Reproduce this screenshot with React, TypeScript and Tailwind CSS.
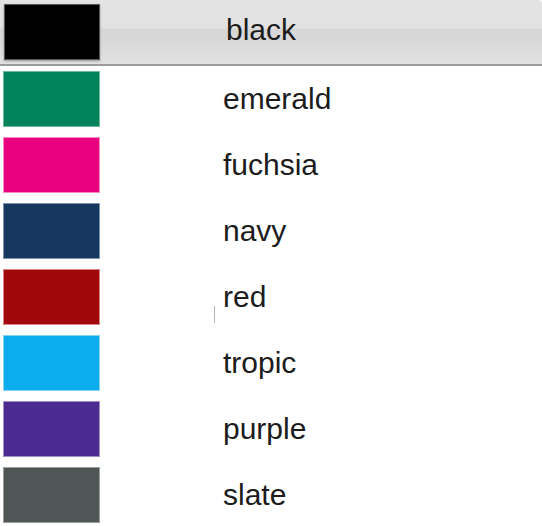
import React from "react";

const rows = [
  { name: "emerald", color: "#02835c", edge: "#6fb9a0" },
  { name: "fuchsia", color: "#e8007f", edge: "#f58cc4" },
  { name: "navy", color: "#16375f", edge: "#7f93ab" },
  { name: "red", color: "#a1060b", edge: "#d58486" },
  { name: "tropic", color: "#0badee", edge: "#86d4f5" },
  { name: "purple", color: "#4c2b91", edge: "#a18fc6" },
  { name: "slate", color: "#505556", edge: "#9a9d9e" },
];

export default function App() {
  return (
    <div
      className="relative w-[542px] h-[526px] bg-white overflow-hidden"
      style={{ fontFamily: '"Liberation Sans", Arial, sans-serif' }}
    >
      <div className="flex items-center h-[66px] border-b-2 border-[#9b9b9b] rounded-tr-[4px] bg-[linear-gradient(to_bottom,#e4e4e4_0%,#e2e2e2_44%,#d7d7d7_46%,#d8d8d8_66%,#dddddd_78%,#e1e1e1_100%)]">
        <div className="ml-[4px] w-[96px] h-[56px] bg-black border border-[#5a5a5a] shadow-[0_1px_2px_rgba(0,0,0,0.35)] shrink-0" />
        <span className="ml-[126px] text-[30px] leading-none text-[#1c1c1c] -mt-[4px]">black</span>
      </div>
      {rows.map((r) => (
        <div key={r.name} className="flex items-center h-[66px]">
          <div
            className="ml-[3px] w-[97px] h-[56px] shrink-0 border"
            style={{ backgroundColor: r.color, borderColor: r.edge }}
          />
          <span className="ml-[123px] text-[30px] leading-none text-[#1c1c1c]">{r.name}</span>
        </div>
      ))}
      <div className="absolute left-[214px] top-[306px] w-px h-[17px] bg-[#b5b5b5]" />
    </div>
  );
}
